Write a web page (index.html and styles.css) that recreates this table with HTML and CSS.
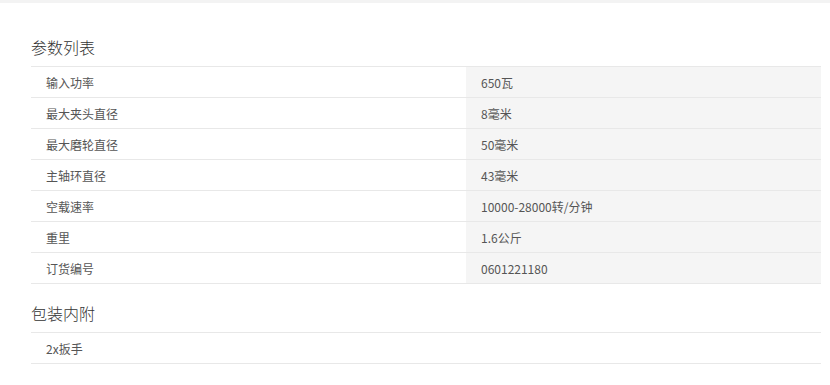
FILE: index.html
```html
<!DOCTYPE html>
<html lang="zh-CN">
<head>
<meta charset="utf-8">
<link rel="stylesheet" href="styles.css">
</head>
<body>
<div class="topbar"></div>
<div class="content">
  <h2 class="section-title">参数列表</h2>
  <div class="spec">
    <div class="row"><div class="label">输入功率</div><div class="value">650瓦</div></div>
    <div class="row"><div class="label">最大夹头直径</div><div class="value">8毫米</div></div>
    <div class="row"><div class="label">最大磨轮直径</div><div class="value">50毫米</div></div>
    <div class="row"><div class="label">主轴环直径</div><div class="value">43毫米</div></div>
    <div class="row"><div class="label">空载速率</div><div class="value">10000-28000转/分钟</div></div>
    <div class="row"><div class="label">重里</div><div class="value">1.6公斤</div></div>
    <div class="row"><div class="label">订货编号</div><div class="value">0601221180</div></div>
  </div>
  <h2 class="section-title second">包装内附</h2>
  <div class="spec">
    <div class="row single"><div class="label">2x扳手</div></div>
  </div>
</div>
</body>
</html>
```

FILE: styles.css
```css
html, body {
  margin: 0;
  padding: 0;
  background: #ffffff;
  font-family: "Noto Sans CJK SC", "Noto Sans", sans-serif;
}
.topbar {
  height: 3px;
  background: #f3f3f3;
}
.content {
  padding-left: 31px;
  width: 790px;
}
.section-title {
  margin: 34px 0 9px 0;
  font-size: 16px;
  line-height: 20px;
  font-weight: 300;
  color: #333333;
}
.section-title.second {
  margin-top: 19px;
}
.spec {
  border-top: 1px solid #e8e8e8;
}
.row {
  display: grid;
  grid-template-columns: 435px 1fr;
  height: 30px;
  border-bottom: 1px solid #e8e8e8;
}
.row.single {
  grid-template-columns: 1fr;
}
.label, .value {
  display: flex;
  align-items: center;
  padding-left: 15px;
  font-size: 12px;
  color: #555555;
}
.value {
  background: #f5f5f5;
}
```
